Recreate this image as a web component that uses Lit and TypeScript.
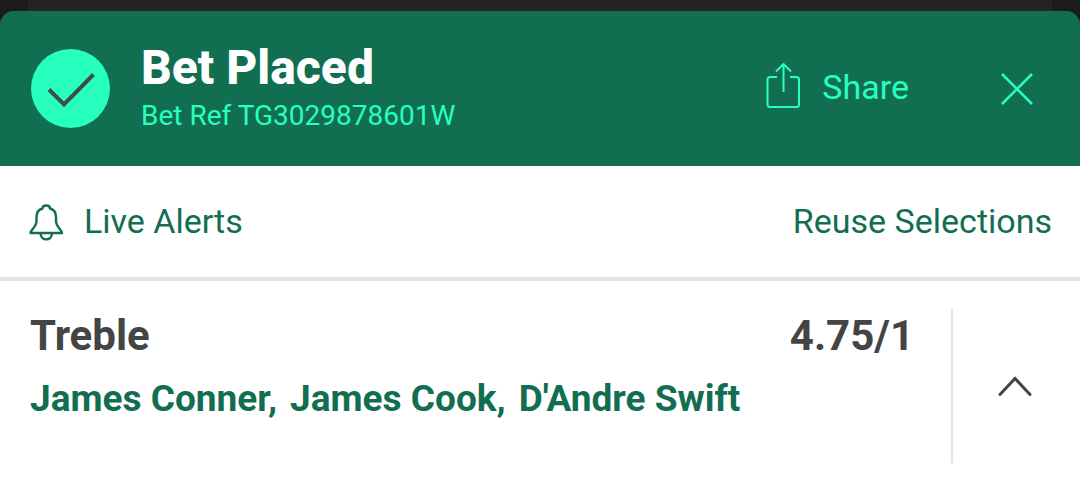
import { LitElement, html, css } from "lit";
import { customElement } from "lit/decorators.js";

@customElement("app-root")
class AppRoot extends LitElement {
  static styles = css`
    :host { display: block; min-height: 100vh; background: #fff; color: #444; font-family: Roboto, "Liberation Sans", sans-serif; }
    * { box-sizing: border-box; margin: 0; }
    svg { display: block; flex: none; fill: none; }
    button { border: 0; padding: 0; background: none; font: inherit; color: inherit; display: flex; align-items: center; cursor: pointer; }
    .backdrop { background: linear-gradient(90deg, #1c1c1c 28px, #232423 28px, #232423 calc(100% - 28px), #1c1c1c calc(100% - 28px)); padding-top: 11px; }
    .header { display: flex; align-items: center; padding: 30px 47px 29px 30px; background: #126e51; border-radius: 14px 14px 0 0; color: #26ffbe; }
    .titles { flex: 1; margin-left: 31px; }
    h1 { color: #fff; font-size: 48px; line-height: 54px; font-weight: 800; }
    .ref { font-size: 28px; line-height: 42px; }
    .share { gap: 22px; font-size: 34px; line-height: 40px; margin-right: 92px; padding-bottom: 4px; }
    .actions { display: flex; align-items: center; justify-content: space-between; padding: 35px 28px 36px; border-bottom: 4px solid #e4e4e4; color: #126e51; font-size: 34px; line-height: 40px; }
    .alerts { gap: 20px; }
    .bet { display: flex; padding-top: 28px; }
    .info { flex: 1; padding: 0 37px 0 30px; }
    .row { display: flex; justify-content: space-between; font-size: 42px; line-height: 54px; font-weight: 700; }
    h2 { font: inherit; }
    .names { display: flex; flex-wrap: wrap; column-gap: 13px; margin-top: 12px; color: #126e51; font-size: 37px; line-height: 48px; font-weight: 700; }
    .toggle { width: 129px; min-height: 154px; justify-content: center; padding-right: 4px; border-left: 2px solid #e4e4e4; }
  `;
  render() {
    return html`
      <div class="backdrop">
        <header class="header">
          <svg width="80" height="80" viewBox="0 0 80 80"><circle cx="40.500" cy="39.500" r="39.500" fill="#26ffbe"/><path d="M19 40.500L34 55.500L63.500 25.500" stroke="#404c48" stroke-width="4"/></svg>
          <div class="titles"><h1>Bet Placed</h1><p class="ref">Bet Ref TG3029878601W</p></div>
          <button class="share"><svg width="34" height="48" viewBox="0 0 34 48" stroke="currentColor" stroke-width="2" stroke-linejoin="round"><path d="M11 14H4Q1.500 14 1.500 16.500V41.500Q1.500 44 4 44H30.500Q33 44 33 41.500V16.500Q33 14 30.500 14H24M17.500 29V1.500M10 8.500L17.500 1L25 8.500"/></svg>Share</button>
          <button aria-label="Close"><svg width="32" height="32" viewBox="0 0 32 32" stroke="currentColor" stroke-width="2.500"><path d="M1 1L31 31M31 1L1 31"/></svg></button>
        </header>
      </div>
      <nav class="actions">
        <button class="alerts"><svg width="36" height="40" viewBox="0 0 36 40" stroke="currentColor" stroke-width="2.400" stroke-linejoin="round"><path d="M2.500 32C2.500 29 8.500 26 8.500 20V16C8.500 11 11 8.500 14.500 7.500C14.500 3.500 22 3.500 22 7.500C25.500 8.500 28 11 28 16V20C28 26 34 29 34 32ZM12.500 32C12.500 40.500 24 40.500 24 32"/></svg>Live Alerts</button>
        <button>Reuse Selections</button>
      </nav>
      <section class="bet">
        <div class="info">
          <div class="row"><h2>Treble</h2><span>4.75/1</span></div>
          <p class="names"><span>James Conner,</span><span>James Cook,</span><span>D'Andre Swift</span></p>
        </div>
        <button class="toggle" aria-label="Collapse bet"><svg width="34" height="20" viewBox="0 0 34 20" stroke="currentColor" stroke-width="3" stroke-linecap="round"><path d="M2 18.500L17 2.500L32 18.500"/></svg></button>
      </section>`;
  }
}
